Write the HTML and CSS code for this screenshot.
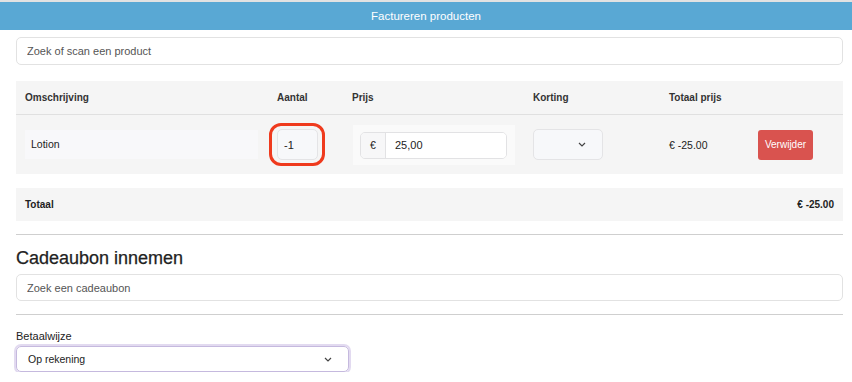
FILE: index.html
```html
<!DOCTYPE html>
<html lang="nl">
<head>
  <meta charset="UTF-8" />
  <meta name="viewport" content="width=device-width, initial-scale=1.0"/>
  <title>Factureren producten</title>
  <link rel="stylesheet" href="styles.css">
</head>
<body>
  <div class="topbar">Factureren producten</div>

  <div class="page">
    <input class="field search" type="text" placeholder="Zoek of scan een product" />

    <!-- Producten -->
    <div class="products">
      <div class="row head">
        <div>Omschrijving</div>
        <div>Aantal</div>
        <div>Prijs</div>
        <div>Korting</div>
        <div>Totaal prijs</div>
        <div></div>
      </div>
      <div class="row item">
        <div><div class="desc">Lotion</div></div>
        <div>
          <span class="qty-wrap">
            <input class="qty" type="text" value="-1" />
            <span class="mark"></span>
          </span>
        </div>
        <div>
          <div class="price-box">
            <div class="price-group">
              <span class="addon">€</span>
              <input class="price" type="text" value="25,00" />
            </div>
          </div>
        </div>
        <div>
          <div class="discount">
            <svg width="8" height="5" viewBox="0 0 8 5"><path d="M1 1 L4 4 L7 1" fill="none" stroke="#444" stroke-width="1.2"/></svg>
          </div>
        </div>
        <div>€ -25.00</div>
        <div><button class="btn-remove">Verwijder</button></div>
      </div>
    </div>

    <div class="total">
      <span>Totaal</span>
      <span>€ -25.00</span>
    </div>

    <hr class="line" />

    <h2>Cadeaubon innemen</h2>
    <input class="field voucher" type="text" placeholder="Zoek een cadeaubon" />

    <hr class="line second" />

    <label class="pay-label">Betaalwijze</label>
    <div class="pay-select">
      <span>Op rekening</span>
      <svg width="8" height="5" viewBox="0 0 8 5"><path d="M1 1 L4 4 L7 1" fill="none" stroke="#444" stroke-width="1.2"/></svg>
    </div>
  </div>
</body>
</html>
```

FILE: styles.css
```css
body {
  margin: 0;
  font-family: "Liberation Sans", Arial, sans-serif;
  font-size: 10.5px;
  color: #222;
  background: #fff;
}
.topbar {
  border-top: 2px solid #e2e2e2;
  background-color: #59a8d4;
  color: #fff;
  font-size: 11.5px;
  height: 28px;
  line-height: 28px;
  text-align: center;
}
.page {
  padding: 0 9px 0 16px;
}
.field {
  display: block;
  box-sizing: border-box;
  width: 100%;
  border: 1px solid #e2e2e2;
  border-radius: 5px;
  padding: 0 10px;
  font-family: inherit;
  font-size: 11px;
  color: #222;
  outline: none;
}
.field::placeholder {
  color: #555;
}
.search {
  margin-top: 7px;
  height: 28px;
}

/* Producten */
.products {
  margin-top: 16px;
  background-color: #f5f5f5;
}
.row {
  display: grid;
  grid-template-columns: 252px 75px 181px 136px 89px 1fr;
  align-items: center;
  padding-left: 9px;
}
.head {
  height: 33px;
  font-size: 10px;
  font-weight: bold;
  color: #333;
  border-bottom: 1px solid #e0e0e0;
}
.item {
  height: 59px;
}
.desc {
  width: 233px;
  height: 29px;
  line-height: 29px;
  box-sizing: border-box;
  padding-left: 6px;
  background-color: #f8f8fa;
}
.qty-wrap {
  position: relative;
  display: inline-block;
}
.qty {
  display: block;
  box-sizing: border-box;
  width: 41px;
  height: 31px;
  border: 1px solid #e4e4e6;
  border-radius: 5px;
  background-color: #f7f8fa;
  padding: 0 6px;
  font-family: inherit;
  font-size: 11px;
  color: #222;
}
.mark {
  position: absolute;
  top: -6px;
  left: -8px;
  right: -7px;
  bottom: -6px;
  border: 3px solid #ef3a1d;
  border-radius: 12px;
}
.price-box {
  margin-left: 1px;
  width: 162px;
  height: 40px;
  box-sizing: border-box;
  padding: 7px;
  background-color: #fafafa;
}
.price-group {
  display: flex;
  width: 147px;
  height: 27px;
  box-sizing: border-box;
  border: 1px solid #e2e2e4;
  border-radius: 5px;
  overflow: hidden;
}
.addon {
  width: 24px;
  border-right: 1px solid #e2e2e4;
  background-color: #f7f7f8;
  line-height: 25px;
  text-align: center;
}
.price {
  flex: 1;
  min-width: 0;
  border: none;
  padding: 0 9px;
  font-family: inherit;
  font-size: 11px;
  color: #222;
}
.discount {
  display: flex;
  justify-content: flex-end;
  align-items: center;
  width: 70px;
  height: 31px;
  box-sizing: border-box;
  padding-right: 16px;
  border: 1px solid #e4e4e6;
  border-radius: 5px;
  background-color: #f7f8fa;
}
.btn-remove {
  width: 55px;
  height: 30px;
  border: none;
  border-radius: 3px;
  background-color: #d9534f;
  color: #fff;
  font-family: inherit;
  font-size: 10px;
  padding: 0;
}

.total {
  display: flex;
  justify-content: space-between;
  align-items: center;
  margin-top: 14px;
  height: 33px;
  padding: 0 9px;
  background-color: #f5f5f5;
  font-size: 10px;
  font-weight: bold;
}
.line {
  margin: 13px 0 0;
  border: none;
  border-top: 1px solid #cfcfcf;
}
h2 {
  margin: 12px 0 0;
  font-size: 18px;
  font-weight: normal;
  line-height: 22px;
  color: #222;
  -webkit-text-stroke: 0.25px #222;
}
.voucher {
  margin-top: 5px;
  height: 27px;
}
.line.second {
  margin-top: 13px;
}
.pay-label {
  display: block;
  margin-top: 15px;
  font-size: 11px;
  line-height: 13px;
}
.pay-select {
  display: flex;
  justify-content: space-between;
  align-items: center;
  margin-top: 3px;
  width: 333px;
  height: 26px;
  box-sizing: border-box;
  padding: 0 16px 0 11px;
  border: 1px solid #c5b9de;
  border-radius: 5px;
  box-shadow: 0 0 0 2px #e2daf0;
  font-size: 10.5px;
}
```
